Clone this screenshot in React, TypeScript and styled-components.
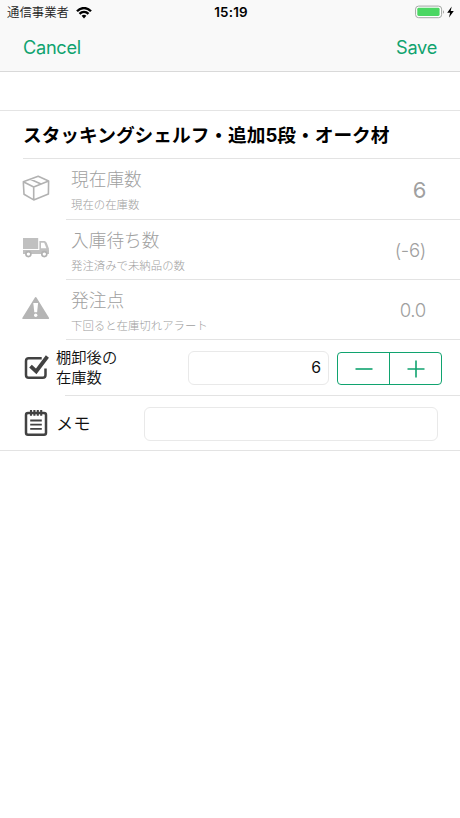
import React from "react";
import styled, { createGlobalStyle } from "styled-components";

const GlobalStyle = createGlobalStyle`
  * { box-sizing: border-box; }
  body {
    margin: 0;
    background: #fff;
    font-family: Inter, "Noto Sans CJK JP", sans-serif;
    color: #111;
  }
`;

const GREEN = "#10a36f";

const Screen = styled.div`
  width: 460px;
  height: 818px;
  background: #fff;
  overflow: hidden;
`;

const Header = styled.header`
  height: 72px;
  background: #f9f9f9;
  border-bottom: 1px solid #d9d9d9;
`;

const StatusBar = styled.div`
  height: 24px;
  display: grid;
  grid-template-columns: 1fr auto 1fr;
  align-items: center;
  padding: 0 5px 0 7px;
`;

const Carrier = styled.div`
  display: flex;
  align-items: center;
  gap: 7px;
  padding-top: 1px;
  font-size: 12.4px;
  font-weight: 350;
  line-height: 23px;
  color: #222;
`;

const Clock = styled.div`
  font-size: 13.4px;
  font-weight: 600;
  line-height: 24px;
  letter-spacing: 0.2px;
  color: #000;
`;

const Power = styled.div`
  display: flex;
  justify-content: flex-end;
`;

const NavBar = styled.nav`
  height: 46px;
  display: flex;
  justify-content: space-between;
  align-items: center;
  padding: 0 23px;
`;

const NavButton = styled.button`
  border: 0;
  padding: 0;
  background: none;
  font: 400 18.2px/24px Inter, sans-serif;
  letter-spacing: -0.3px;
  color: ${GREEN};
`;

const Spacer = styled.div`
  height: 39px;
  border-bottom: 1px solid #e4e4e4;
`;

const TitleRow = styled.h1`
  margin: 0;
  height: 47px;
  padding: 1px 0 0 23px;
  font-size: 18.7px;
  font-weight: 700;
  line-height: 47px;
  white-space: nowrap;
  color: #000;
`;

const Divider = styled.hr<{ $inset?: number }>`
  margin: 0 0 0 ${(p) => p.$inset ?? 0}px;
  border: 0;
  height: 1px;
  background: #e3e3e3;
`;

const InfoRow = styled.div<{ $height: number }>`
  height: ${(p) => p.$height}px;
  display: flex;
  align-items: center;
  padding: 0 34px 0 22px;
`;

const IconSlot = styled.div<{ $width: number; $lift?: number }>`
  width: ${(p) => p.$width}px;
  flex: none;
  display: flex;
  padding-bottom: ${(p) => p.$lift ?? 0}px;
`;

const InfoText = styled.div`
  flex: 1;
  padding-top: 5px;
`;

const InfoLabel = styled.div`
  font-size: 17.7px;
  font-weight: 300;
  line-height: 26px;
  color: #a0a0a0;
`;

const InfoHint = styled.div`
  margin-top: 1px;
  font-size: 11.4px;
  font-weight: 300;
  line-height: 22px;
  color: #a0a0a0;
`;

const InfoValue = styled.div<{ $large?: boolean }>`
  padding-top: 1px;
  font-size: ${(p) => (p.$large ? 22 : 18.6)}px;
  font-weight: ${(p) => (p.$large ? 400 : 300)};
  letter-spacing: -0.3px;
  color: #a0a0a0;
`;

const FormRow = styled.div<{ $height: number; $right: number }>`
  height: ${(p) => p.$height}px;
  display: flex;
  align-items: center;
  padding: 0 ${(p) => p.$right}px 0 24px;
`;

const FormLabel = styled.label<{ $size: number; $width: number }>`
  width: ${(p) => p.$width}px;
  flex: none;
  padding-top: 1px;
  font-size: ${(p) => p.$size}px;
  font-weight: 350;
  line-height: 20px;
  color: #111;
`;

const Field = styled.input<{ $drop?: number }>`
  flex: 1;
  min-width: 0;
  height: 34px;
  margin-top: ${(p) => p.$drop ?? 0}px;
  padding: 0 7px;
  border: 1px solid #e9e9e9;
  border-radius: 6px;
  background: #fff;
  font: 400 15.8px Inter, sans-serif;
  text-align: right;
  color: #111;
  outline: none;
`;

const Stepper = styled.div`
  display: flex;
  width: 105px;
  height: 33px;
  margin: 2px 0 0 8px;
  border: 1px solid ${GREEN};
  border-radius: 4px;
`;

const StepButton = styled.button`
  flex: 1;
  display: flex;
  align-items: center;
  justify-content: center;
  border: 0;
  padding: 0;
  background: none;
  color: ${GREEN};
  & + & { border-left: 1px solid ${GREEN}; }
`;

const WifiIcon = () => (
  <svg width="16" height="12" viewBox="0 0 16 12" fill="none" stroke="#000" strokeWidth="2.3">
    <path d="M1 4.3C5-.1 11-.1 15 4.3M3.5 6.9C6 4.2 10 4.2 12.5 6.9" />
    <path d="M8 11.4L5.6 8.8Q8 6.8 10.4 8.8Z" fill="#000" stroke="none" />
  </svg>
);

const BatteryIcon = () => (
  <svg width="40" height="14" viewBox="0 0 40 14">
    <rect x=".6" y="1.1" width="26" height="11.6" rx="3" fill="#fff" stroke="#a2a7a3" />
    <rect x="2.3" y="2.8" width="22.3" height="8.2" rx="1.4" fill="#4bd763" />
    <path d="M28 5Q29.6 7 28 9Z" fill="#777" />
    <path d="M36.7 1.5L32.2 7.8H35.1L34 12.5L38.8 6H35.7Z" fill="#000" />
  </svg>
);

const BoxIcon = () => (
  <svg width="28" height="28" viewBox="0 0 28 28" fill="none" stroke="#b2b2b2" strokeWidth="1.6" strokeLinejoin="round">
    <path d="M1.3 7.8L16.2 2.2L26.6 7L11.7 13ZM1.3 7.8L2 20.3L11.7 25.9L26.4 20L26.6 7M11.7 13V25.9M8.4 5.2L19 10" />
  </svg>
);

const TruckIcon = () => (
  <svg width="28" height="22" viewBox="0 0 28 22">
    <path d="M1 1H16.2V12H1ZM1 13H27V17H1Z" fill="#c0c0c0" />
    <path d="M17.4 4H22.6Q24 4.3 24.8 6L26.9 11.5V14H17.4Z" fill="#c0c0c0" />
    <path d="M19 5.8H22.2L24.4 11.2H19Z" fill="#fff" />
    <g fill="#fff" stroke="#b2b2b2" strokeWidth="1.6">
      <circle cx="6.4" cy="17.1" r="2.5" />
      <circle cx="22.3" cy="17.1" r="2.5" />
    </g>
  </svg>
);

const WarningIcon = () => (
  <svg width="28" height="24" viewBox="0 0 28 24">
    <path d="M13.7 2L26.2 22.2H1.2Z" fill="#b5b5b5" stroke="#b5b5b5" strokeWidth="1.8" strokeLinejoin="round" />
    <path d="M11.3 7H16.1L15.1 16.2H12.3Z" fill="#fff" />
    <circle cx="13.7" cy="19.3" r="1.7" fill="#fff" />
  </svg>
);

const CheckIcon = () => (
  <svg width="26" height="26" viewBox="0 0 26 26" fill="none" stroke="#424242">
    <path d="M17.7 4.2H4.7Q2 4.2 2 6.9V21Q2 23.8 4.7 23.8H18.7Q21.5 23.8 21.5 21V14.5" strokeWidth="2.5" />
    <path d="M6.5 12.1L12.2 17.5L23.4 2.5" strokeWidth="3.8" />
  </svg>
);

const MemoIcon = () => (
  <svg width="24" height="28" viewBox="0 0 24 28" fill="none" stroke="#424242">
    <rect x="2" y="4.1" width="20" height="21.7" rx="2" strokeWidth="2.5" />
    <path d="M7 1V6.7M10.4 1V6.7M13.8 1V6.7M17.2 1V6.7" strokeWidth="2.1" />
    <path d="M6.2 11.5H17.8M6.2 15.7H17.8M6.2 19.9H17.8" strokeWidth="1.8" />
  </svg>
);

const MinusIcon = () => (
  <svg width="18" height="18" viewBox="0 0 18 18" stroke="currentColor" strokeWidth="1.6">
    <path d="M.5 9H17.5" />
  </svg>
);

const PlusIcon = () => (
  <svg width="18" height="18" viewBox="0 0 18 18" stroke="currentColor" strokeWidth="1.6">
    <path d="M.5 9H17.5M9 .5V17.5" />
  </svg>
);

const stockRows = [
  { label: "現在庫数", hint: "現在の在庫数", value: "6", icon: <BoxIcon />, height: 60, large: true },
  { label: "入庫待ち数", hint: "発注済みで未納品の数", value: "(-6)", icon: <TruckIcon />, height: 59, large: false },
  { label: "発注点", hint: "下回ると在庫切れアラート", value: "0.0", icon: <WarningIcon />, height: 59, large: false },
];

export default function App() {
  return (
    <Screen lang="ja">
      <GlobalStyle />
      <Header>
        <StatusBar>
          <Carrier>通信事業者<WifiIcon /></Carrier>
          <Clock>15:19</Clock>
          <Power><BatteryIcon /></Power>
        </StatusBar>
        <NavBar>
          <NavButton>Cancel</NavButton>
          <NavButton>Save</NavButton>
        </NavBar>
      </Header>
      <Spacer />
      <TitleRow>スタッキングシェルフ・追加5段・オーク材</TitleRow>
      <Divider $inset={23} />
      {stockRows.map((row) => (
        <React.Fragment key={row.label}>
          <InfoRow $height={row.height}>
            <IconSlot $width={49} $lift={3}>{row.icon}</IconSlot>
            <InfoText>
              <InfoLabel>{row.label}</InfoLabel>
              <InfoHint>{row.hint}</InfoHint>
            </InfoText>
            <InfoValue $large={row.large}>{row.value}</InfoValue>
          </InfoRow>
          <Divider $inset={66} />
        </React.Fragment>
      ))}
      <FormRow $height={55} $right={18}>
        <IconSlot $width={32} $lift={2}><CheckIcon /></IconSlot>
        <FormLabel $size={15.3} $width={132} htmlFor="count">棚卸後の<br />在庫数</FormLabel>
        <Field id="count" defaultValue="6" />
        <Stepper>
          <StepButton aria-label="−"><MinusIcon /></StepButton>
          <StepButton aria-label="+"><PlusIcon /></StepButton>
        </Stepper>
      </FormRow>
      <Divider $inset={65} />
      <FormRow $height={54} $right={22}>
        <IconSlot $width={32}><MemoIcon /></IconSlot>
        <FormLabel $size={17.3} $width={88} htmlFor="memo">メモ</FormLabel>
        <Field id="memo" $drop={2} />
      </FormRow>
      <Divider />
    </Screen>
  );
}
